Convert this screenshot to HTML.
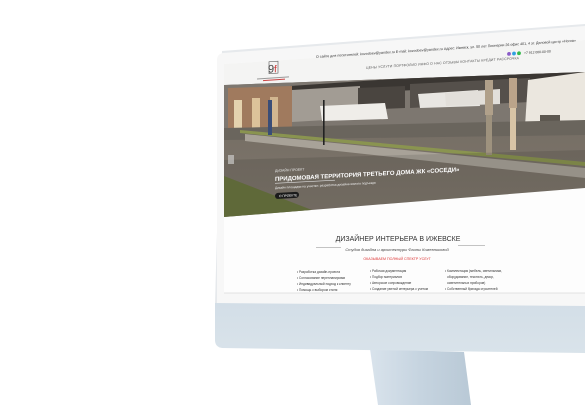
<!DOCTYPE html>
<html><head><meta charset="utf-8"><style>
html,body{margin:0;padding:0;background:#fff;width:585px;height:405px;overflow:hidden}
svg{display:block}
text{font-family:"Liberation Sans",sans-serif}
</style></head><body>
<svg width="585" height="405" viewBox="0 0 585 405" xmlns="http://www.w3.org/2000/svg">
<defs>
<linearGradient id="stand" x1="0" x2="1"><stop offset="0" stop-color="#d9e3ec"/><stop offset="0.5" stop-color="#c6d4e0"/><stop offset="1" stop-color="#b9c9d6"/></linearGradient>
<linearGradient id="chin" x1="0" x2="0" y1="0" y2="1"><stop offset="0" stop-color="#d3dee7"/><stop offset="1" stop-color="#d9e3ea"/></linearGradient>
<linearGradient id="road" x1="0" x2="0" y1="0" y2="1"><stop offset="0" stop-color="#6e675f"/><stop offset="1" stop-color="#80786d"/></linearGradient>
<clipPath id="ph"><polygon points="224,85 585,72 585,188 224,217"/></clipPath>
</defs>
<polygon points="370,349 464,352 471,405 378,405" fill="url(#stand)"/>
<path d="M222,51 L585,24 L585,306 L215,304 Z" fill="#e6e9ec"/>
<path d="M223,53 L585,26 L585,306 L217,304 L217,60 Q217,54 223,53 Z" fill="#f7f7f7"/>
<path d="M215,303 L585,306 L585,353 L222,348 Q215,347 215,340 Z" fill="url(#chin)"/>
<polygon points="224,64 585,40 585,293 224,293" fill="#fdfdfd"/>
<polygon points="224,64 585,40 585,72 224,85" fill="#f4f4f3"/>
<g clip-path="url(#ph)">
<rect x="224" y="60" width="361" height="160" fill="url(#road)"/>
<polygon points="224,85 585,60 585,125 224,130" fill="#7d7770"/>
<polygon points="290,86 585,66 585,82 290,96" fill="#3a3632"/>
<polygon points="228,88 292,86 292,128 228,130" fill="#a07a5e"/>
<rect x="234" y="100" width="8" height="28" fill="#e4d2ae"/>
<rect x="252" y="98" width="8" height="30" fill="#dcc29a"/>
<rect x="270" y="97" width="8" height="31" fill="#d2b690"/>
<polygon points="292,90 360,86 360,118 292,122" fill="#a29c94"/>
<polygon points="358,88 405,86 405,108 358,110" fill="#4a4540"/>
<polygon points="410,84 530,78 530,102 410,108" fill="#55504b"/>
<polygon points="320,106 385,103 388,119 322,121" fill="#efede9"/>
<polygon points="418,94 478,90 480,106 420,108" fill="#e8e6e2"/>
<polygon points="445,93 500,89 500,104 446,106" fill="#e2dfda"/>
<polygon points="528,80 585,72 585,130 525,126" fill="#ebe7df"/>
<rect x="540" y="115" width="20" height="8" fill="#5c574f"/>
<polygon points="224,128 585,120 585,135 224,140" fill="#6a655d"/>
<polygon points="245,134 585,168 585,178 245,141" fill="#a8a298"/>
<polygon points="240,130 585,162 585,166 240,133" fill="#8a9450"/>
<polygon points="224,176 330,217 224,217" fill="#6a7540"/>
<rect x="323" y="100" width="1.6" height="45" fill="#222"/>
<rect x="485" y="80" width="8" height="35" fill="#b0a08a"/>
<rect x="486" y="115" width="6" height="40" fill="#9e927e"/>
<rect x="509" y="78" width="8" height="30" fill="#bba48a"/>
<rect x="510" y="108" width="6" height="42" fill="#d8c4a6"/>
<rect x="268" y="100" width="4" height="35" fill="#3a4d77"/>
</g>
<polygon points="224,160 585,150 585,188 224,217" fill="#000" opacity="0.1"/>
<g transform="translate(275,172) skewY(-3)">
<text x="0" y="0" font-size="3.5" fill="#e8e8e8">ДИЗАЙН ПРОЕКТ</text>
<text x="0" y="9" font-size="6" fill="#fff" font-weight="bold">ПРИДОМОВАЯ ТЕРРИТОРИЯ ТРЕТЬЕГО ДОМА ЖК «СОСЕДИ»</text>
<rect x="0" y="11" width="60" height="0.6" fill="#ddd"/>
<text x="0" y="17" font-size="3.2" fill="#eee">Дизайн площадки на участке: разработка дизайна жилого подъезда</text>
<rect x="0" y="21" width="24" height="6" rx="3" fill="#1b1b1b"/>
<text x="4" y="25.4" font-size="3.2" fill="#fff">О ПРОЕКТЕ</text>
</g>
<g transform="translate(265,62) skewY(-3.8)">
<rect x="4" y="0" width="9" height="12" fill="none" stroke="#555" stroke-width="0.6"/>
<text x="3" y="11" font-size="11" fill="#444" font-family="Liberation Serif">9</text>
<text x="9" y="11" font-size="10" fill="#c33" font-family="Liberation Serif">f</text>
<rect x="-8" y="16" width="32" height="1" fill="#999"/>
<rect x="-2" y="18" width="22" height="1" fill="#c44"/>
</g>
<g transform="translate(316,58) skewY(-3.6)">
<text x="0" y="0" font-size="3.6" fill="#333">О сайте для посетителей: kozodoev@yandex.ru  E-mail: kozodoev@yandex.ru  Адрес: Ижевск, ул. 50 лет Пионерии 26 офис 401, 4 эт. Деловой центр «Ногна»</text>
<text x="50" y="14" font-size="3.4" fill="#555" letter-spacing="0.2">ЦЕНЫ   УСЛУГИ   ПОРТФОЛИО   ИНФО   О НАС   ОТЗЫВЫ   КОНТАКТЫ   КРЕДИТ   РАССРОЧКА</text>
<circle cx="193" cy="8" r="1.9" fill="#8a5cc8"/>
<circle cx="198" cy="8" r="1.9" fill="#2fa0e0"/>
<circle cx="203" cy="8" r="1.9" fill="#32b94a"/>
<text x="208" y="9.2" font-size="3.4" fill="#333">+7 912 000-00-00</text>
</g>
<rect x="228" y="155" width="6" height="9" fill="#d8d8d8" opacity="0.6"/>
<text x="398" y="241" font-size="7" fill="#333" text-anchor="middle">ДИЗАЙНЕР ИНТЕРЬЕРА В ИЖЕВСКЕ</text>
<rect x="316" y="247" width="25" height="0.7" fill="#aaa"/>
<rect x="458" y="245" width="27" height="0.7" fill="#aaa"/>
<text x="397" y="251" font-size="4" fill="#444" text-anchor="middle" font-style="italic" font-family="Liberation Serif">Студия дизайна и архитектуры Фаины Кожевниковой</text>
<text x="397" y="260" font-size="3.6" fill="#d33" text-anchor="middle">ОКАЗЫВАЕМ ПОЛНЫЙ СПЕКТР УСЛУГ</text>
<g font-size="3.2" fill="#333">
<text x="297" y="273">• Разработка дизайн-проекта</text>
<text x="297" y="279">• Согласование перепланировки</text>
<text x="297" y="285">• Индивидуальный подход к клиенту</text>
<text x="297" y="291">• Помощь с выбором стиля</text>
<text x="370" y="272">• Рабочая документация</text>
<text x="370" y="278">• Подбор материалов</text>
<text x="370" y="284">• Авторское сопровождение</text>
<text x="370" y="290">• Создание уютной интерьера с учетом</text>
<text x="445" y="272">• Комплектация (мебель, светильники,</text>
<text x="447" y="278">оборудование, текстиль, декор,</text>
<text x="447" y="284">осветительных приборов)</text>
<text x="445" y="290">• Собственный бригада строителей</text>
</g>
<line x1="224" y1="293" x2="585" y2="293" stroke="#d8d8d8" stroke-width="0.8"/>
</svg>
</body></html>
